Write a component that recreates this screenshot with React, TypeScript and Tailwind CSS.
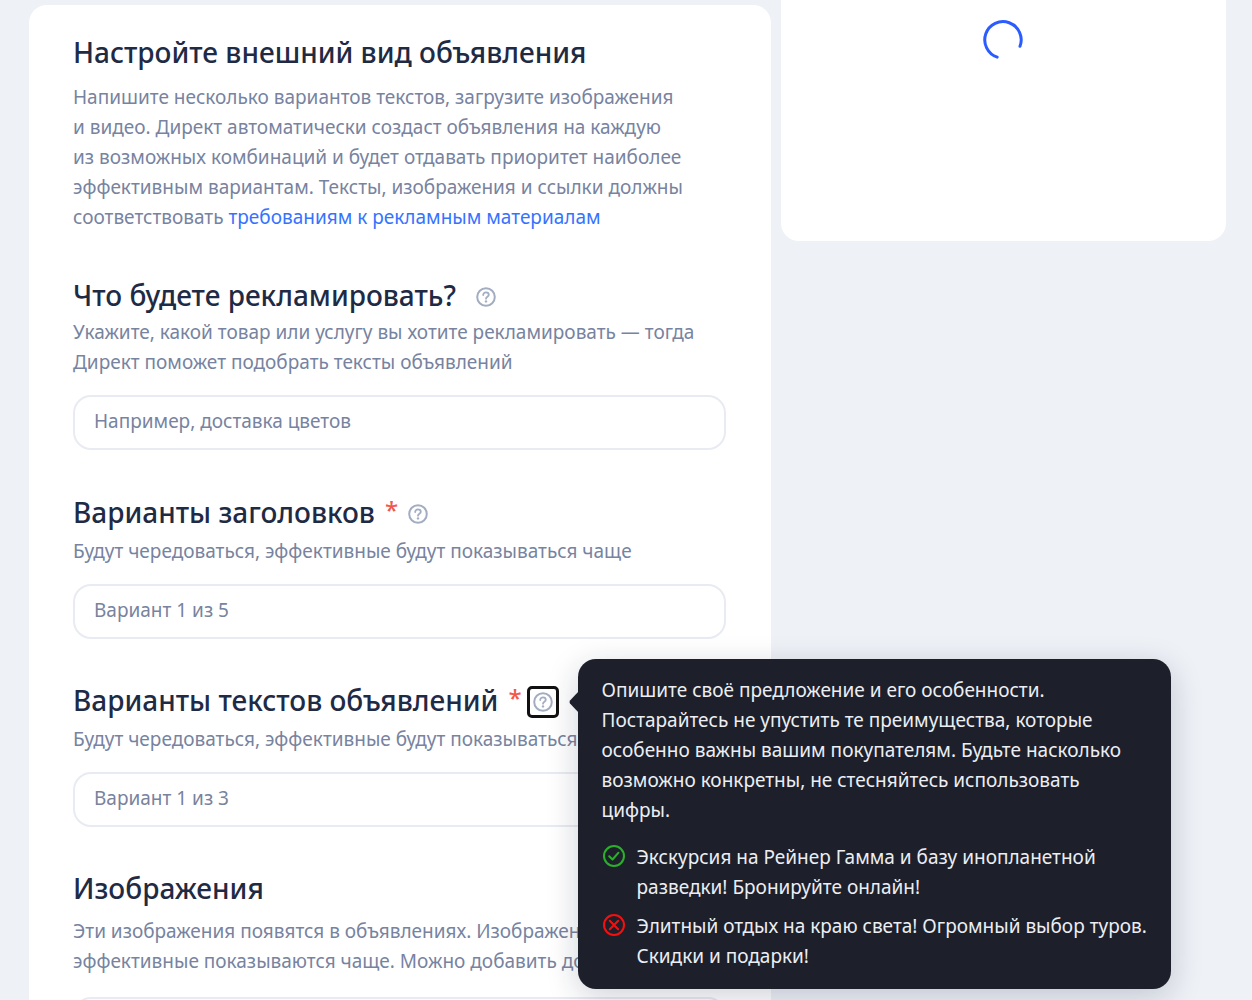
import type { ReactNode } from "react";

function HelpIcon() {
  return (
    <svg width="20" height="20" viewBox="0 0 20 20" fill="none" stroke="#a3adc2" strokeWidth="2" aria-hidden="true">
      <circle cx="10" cy="10" r="8.8" />
      <path d="M7.2 8c0-1.600 1.200-2.700 2.800-2.700s2.800 1 2.800 2.500c0 2-2.800 1.900-2.800 3.900" strokeWidth="1.800" strokeLinecap="round" />
      <circle cx="10" cy="14.4" r="1.2" fill="#a3adc2" stroke="none" />
    </svg>
  );
}

function Spinner() {
  return (
    <svg width="40" height="40" viewBox="0 0 40 40" fill="none" role="status" aria-label="Загрузка">
      <path d="M14.2 37.1A18.2 18.2 0 1 1 37 26.3" stroke="#2b5cff" strokeWidth="3" strokeLinecap="round" />
    </svg>
  );
}

function CheckIcon() {
  return (
    <svg className="mt-0.5 shrink-0" width="24" height="24" viewBox="0 0 24 24" fill="none" stroke="#2bb02b" strokeWidth="2" strokeLinecap="round" strokeLinejoin="round" aria-hidden="true">
      <circle cx="12" cy="12" r="10" />
      <path d="M7.2 12.2l3.3 3.3 6-6.8" />
    </svg>
  );
}

function CrossIcon() {
  return (
    <svg className="mt-0.5 shrink-0" width="24" height="24" viewBox="0 0 24 24" fill="none" stroke="#f5100f" strokeWidth="2" strokeLinecap="round" aria-hidden="true">
      <circle cx="12" cy="12" r="10" />
      <path d="M7.8 7.8l8.4 8.4M16.2 7.8l-8.4 8.4" />
    </svg>
  );
}

function Star() {
  return <span className="ml-[10px] inline-block align-top text-[24px] leading-8 text-[#f4564e]">*</span>;
}

function Title({ id, children }: { id?: string; children: ReactNode }) {
  return (
    <h2 className="h-9 text-[28px] leading-9 font-medium whitespace-nowrap text-[#1f2b45]">
      {id ? <label htmlFor={id}>{children}</label> : children}
    </h2>
  );
}

function Hint({ children }: { children: ReactNode }) {
  return <p className="text-[19px] leading-[30px] whitespace-nowrap text-[#77839f]">{children}</p>;
}

function Field({ id, placeholder }: { id: string; placeholder?: string }) {
  return (
    <input
      id={id}
      type="text"
      placeholder={placeholder}
      className="mt-[18px] block h-[55px] w-full rounded-[18px] border-2 border-[#e9ebf2] bg-white px-[19px] pb-1 text-[19px] text-[#1f2b45] outline-none placeholder:text-[#77839f]"
    />
  );
}

function HelpTooltip() {
  return (
    <div
      role="tooltip"
      id="texts-tooltip"
      className="absolute -top-[27px] left-[51px] z-10 w-[593px] rounded-[18px] bg-[#1d202b] pt-4 pr-5 pb-[18px] pl-6 text-[19px] leading-[30px] whitespace-nowrap text-[#eceef3] shadow-[0_8px_32px_rgba(20,30,60,0.2)]"
    >
      <svg className="absolute top-8 -left-[9px]" width="10" height="22" viewBox="0 0 10 22" aria-hidden="true">
        <path d="M10 0v22L1 12.500q-1-1.500 0-3z" fill="#1d202b" />
      </svg>
      <p>
        Опишите своё предложение и его особенности.
        <br />
        Постарайтесь не упустить те преимущества, которые
        <br />
        особенно важны вашим покупателям. Будьте насколько
        <br />
        возможно конкретны, не стесняйтесь использовать
        <br />
        цифры.
      </p>
      <ul className="mt-[17px] flex flex-col gap-[9px]">
        <li className="flex gap-[11px]">
          <CheckIcon />
          <span>
            Экскурсия на Рейнер Гамма и базу инопланетной
            <br />
            разведки! Бронируйте онлайн!
          </span>
        </li>
        <li className="flex gap-[11px]">
          <CrossIcon />
          <span>
            Элитный отдых на краю света! Огромный выбор туров.
            <br />
            Скидки и подарки!
          </span>
        </li>
      </ul>
    </div>
  );
}

export default function App() {
  return (
    <main className="grid h-screen grid-cols-[minmax(0,5fr)_minmax(0,3fr)] items-start gap-[10px] overflow-y-auto bg-[#eef1f6] pr-[26px] pl-[29px] font-['Noto_Sans',sans-serif] [scrollbar-width:none]">
      <div className="mt-[5px] rounded-[18px] bg-white pt-[29px] pr-[45px] pb-11 pl-11">
        <section>
          <Title>Настройте внешний вид объявления</Title>
          <div className="mt-3">
            <Hint>
              Напишите несколько вариантов текстов, загрузите изображения
              <br />
              и видео. Директ автоматически создаст объявления на каждую
              <br />
              из возможных комбинаций и будет отдавать приоритет наиболее
              <br />
              эффективным вариантам. Тексты, изображения и ссылки должны
              <br />
              соответствовать{" "}
              <a href="#requirements" className="text-[#3573ff]">
                требованиям к рекламным материалам
              </a>
            </Hint>
          </div>
        </section>

        <section className="mt-[45px]">
          <div className="flex items-center gap-5">
            <Title id="product">Что будете рекламировать?</Title>
            <button type="button" aria-label="Подсказка о товаре" className="mt-1">
              <HelpIcon />
            </button>
          </div>
          <div className="mt-1">
            <Hint>
              Укажите, какой товар или услугу вы хотите рекламировать — тогда
              <br />
              Директ поможет подобрать тексты объявлений
            </Hint>
          </div>
          <Field id="product" placeholder="Например, доставка цветов" />
        </section>

        <section className="mt-11">
          <div className="flex items-center gap-[10px]">
            <Title id="headline">
              Варианты заголовков
              <Star />
            </Title>
            <button type="button" aria-label="Подсказка о заголовках" className="mt-1">
              <HelpIcon />
            </button>
          </div>
          <div className="mt-[6px]">
            <Hint>Будут чередоваться, эффективные будут показываться чаще</Hint>
          </div>
          <Field id="headline" placeholder="Вариант 1 из 5" />
        </section>

        <section className="mt-[43px]">
          <div className="flex items-center gap-[5px]">
            <Title id="text">
              Варианты текстов объявлений
              <Star />
            </Title>
            <div className="relative mt-1">
              <button
                type="button"
                aria-label="Подсказка о текстах"
                aria-describedby="texts-tooltip"
                className="flex size-8 items-center justify-center rounded-[5px] border-[3px] border-[#101010]"
              >
                <HelpIcon />
              </button>
              <HelpTooltip />
            </div>
          </div>
          <div className="mt-[6px]">
            <Hint>Будут чередоваться, эффективные будут показываться чаще</Hint>
          </div>
          <Field id="text" placeholder="Вариант 1 из 3" />
        </section>

        <section className="mt-[43px]">
          <Title id="images">Изображения</Title>
          <div className="mt-[10px] mb-[21px]">
            <Hint>
              Эти изображения появятся в объявлениях. Изображения
              <br />
              эффективные показываются чаще. Можно добавить до 5
            </Hint>
          </div>
          <Field id="images" />
        </section>
      </div>

      <aside className="flex h-[241px] items-start justify-center rounded-b-[18px] bg-white pt-5">
        <Spinner />
      </aside>
    </main>
  );
}
